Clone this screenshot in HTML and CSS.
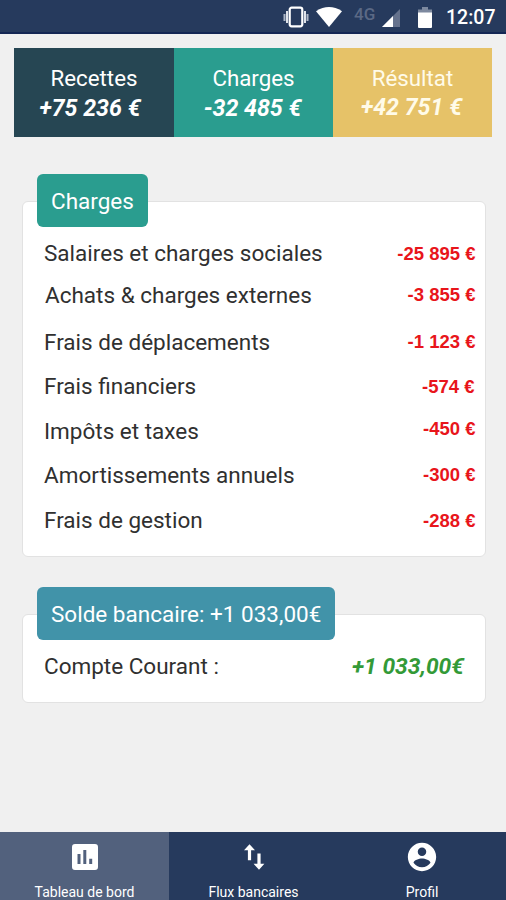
FILE: index.html
```html
<!DOCTYPE html>
<html lang="fr">
<head>
<meta charset="utf-8">
<title>Tableau de bord</title>
<link rel="stylesheet" href="styles.css">
</head>
<body>
<header class="status">
  <svg class="vibrate" viewBox="0 0 26 22"><rect x="6.7" y="1.7" width="12.6" height="18.6" rx="2" fill="none" stroke="#fff" stroke-width="2.2"/><path d="M4 5v12M22 5v12" stroke="#dfe3ea" stroke-width="2"/><path d="M1.5 8v7M24.500 8v7" stroke="#aeb7c7" stroke-width="2"/></svg>
  <svg class="wifi" viewBox="0 0 26 20"><path d="M0 4.2Q13-4.2 26 4.2L13 20Z" fill="#fff"/></svg>
  <span class="network">4G</span>
  <svg class="signal" viewBox="0 0 18 18"><path d="M0 18L18 0V18Z" fill="#65728d"/><path d="M0 18L11 7V18Z" fill="#fff"/></svg>
  <svg class="battery" viewBox="0 0 14 21"><path d="M4 0h6v2.5h4V6H0V2.5h4Z" fill="#7d899f"/><path d="M0 5.5h14V20a1 1 0 0 1-1 1H1a1 1 0 0 1-1-1Z" fill="#fff"/></svg>
  <time class="clock">12:07</time>
</header>
<main class="content">
  <section class="summary">
    <div class="tile income"><span>Recettes</span><strong>+75 236 €</strong></div>
    <div class="tile costs"><span>Charges</span><strong>-32 485 €</strong></div>
    <div class="tile result"><span>Résultat</span><strong>+42 751 €</strong></div>
  </section>
  <section class="card expenses">
    <h2 class="tag">Charges</h2>
    <ul class="rows">
      <li class="r1"><span>Salaires et charges sociales</span><b>-25 895 €</b></li>
      <li class="r2"><span>Achats &amp; charges externes</span><b>-3 855 €</b></li>
      <li class="r3"><span>Frais de déplacements</span><b>-1 123 €</b></li>
      <li class="r4"><span>Frais financiers</span><b>-574 €</b></li>
      <li class="r5"><span>Impôts et taxes</span><b>-450 €</b></li>
      <li class="r6"><span>Amortissements annuels</span><b>-300 €</b></li>
      <li class="r7"><span>Frais de gestion</span><b>-288 €</b></li>
    </ul>
  </section>
  <section class="card balance">
    <h2 class="tag">Solde bancaire: +1 033,00€</h2>
    <div class="account"><span>Compte Courant :</span><strong>+1 033,00€</strong></div>
  </section>
</main>
<nav class="tabs">
  <a class="tab active"><svg viewBox="0 0 34 34"><path fill="#fff" fill-rule="evenodd" d="M7 4H27Q30 4 30 7V27Q30 30 27 30H7Q4 30 4 27V7Q4 4 7 4ZM9.5 14v10h3V14ZM15.3 10v14h3V10ZM21.2 18.7V24h3v-5.3Z"/></svg><span>Tableau de bord</span></a>
  <a class="tab"><svg viewBox="0 0 34 34"><path fill="#fff" d="M7 10.2L12.5 4.3L18 10.2H14.1V20.2H10.9V10.2ZM16.6 23.8H20.4V13.5H23.6V23.8H27.4L22 29.7Z"/></svg><span>Flux bancaires</span></a>
  <a class="tab"><svg viewBox="0 0 24 24"><path fill="#fff" d="M12 2C6.5 2 2 6.500 2 12s4.500 10 10 10 10-4.500 10-10S17.500 2 12 2zm0 3.300c1.650 0 3 1.350 3 3s-1.350 3-3 3-3-1.350-3-3 1.350-3 3-3zm0 14c-2.500 0-4.700-1.300-6-3.200.03-2 4-3.100 6-3.100s5.970 1.100 6 3.100c-1.300 1.900-3.500 3.200-6 3.200z"/></svg><span>Profil</span></a>
</nav>
</body>
</html>
```
FILE: styles.css
```css
* { box-sizing: border-box; }
body {
  margin: 0;
  width: 506px;
  height: 900px;
  display: flex;
  flex-direction: column;
  overflow: hidden;
  background: #f0f0f0;
  color: #303030;
  font-family: Roboto, "Liberation Sans", sans-serif;
}
.status {
  height: 34px;
  flex: none;
  display: flex;
  align-items: flex-start;
  padding-left: 283px;
  background: #263a5d;
  border-bottom: 2px solid #142754;
}
.vibrate { width: 26px; height: 22px; margin-top: 6px; }
.wifi { width: 26px; height: 20px; margin: 7px 0 0 7px; }
.network { width: 22px; margin: 4px 0 0 12px; font-size: 17px; line-height: 20px; font-weight: 500; color: #5b6985; }
.signal { width: 18px; height: 18px; margin: 9px 0 0 6px; }
.battery { width: 14px; height: 21px; margin: 7px 0 0 18px; }
.clock { margin: 6px 0 0 14px; font-size: 19.5px; line-height: 24px; font-weight: 500; color: #fff; }
.content { flex: 1; padding: 14px 14px 0; }
.summary { display: grid; grid-template-columns: 160px 159px 159px; height: 89px; }
.tile {
  padding-top: 16px;
  text-align: center;
  color: #fff;
  font-size: 22.3px;
  line-height: 29px;
}
.tile span, .tile strong { display: block; }
.tile strong { font-size: 23.2px; line-height: 31px; font-style: italic; font-weight: 700; }
.income { background: #264653; }
.income strong { margin-right: 8px; }
.costs { background: #2a9d8f; }
.costs strong { margin-right: 2px; }
.result { background: #e6c268; color: #fffbe9; }
.result strong { margin-right: 2px; line-height: 29px; }
.card {
  width: 464px;
  margin-left: 8px;
  background: #fff;
  border: 1px solid #e2e2e2;
  border-radius: 6px;
}
.expenses { height: 356px; margin-top: 64px; }
.balance { height: 89px; margin-top: 57px; }
.tag {
  width: max-content;
  height: 53px;
  margin: -28px 0 0 14px;
  padding: 0 14px;
  border-radius: 6px;
  color: #fff;
  font-size: 22.5px;
  line-height: 55px;
  font-weight: 400;
}
.expenses .tag { background: #2a9d8f; }
.balance .tag { background: #4193a9; }
.rows { margin: 14px 0 0; padding: 0 9.5px 0 21px; list-style: none; }
.rows li {
  display: flex;
  justify-content: space-between;
  align-items: flex-start;
  height: 45px;
  font-size: 22.5px;
  line-height: 24px;
}
.rows b {
  padding-top: 1px;
  color: #e8151b;
  font-family: "Liberation Sans", Arial, sans-serif;
  font-size: 18.5px;
}
.rows .r1 { height: 42px; }
.rows .r2 { height: 47px; }
.rows .r2 span { padding-left: 1px; }
.rows .r2 b { padding-top: 0; }
.rows .r3 { height: 44px; }
.rows .r3 b { padding-top: 0; }
.rows .r4 b { padding-right: 1px; }
.rows .r5 { height: 44px; }
.rows .r5 b { padding-top: 0; margin-top: -2px; }
.rows .r6 b { padding-top: 0; }
.account {
  display: flex;
  justify-content: space-between;
  padding: 14px 21px 0;
  font-size: 22.5px;
  line-height: 24px;
}
.account strong { color: #339a37; font-size: 22.8px; line-height: 26px; font-style: italic; }
.tabs {
  flex: none;
  height: 68px;
  display: grid;
  grid-template-columns: 169px 169px 168px;
  background: #263a5d;
}
.tab { display: flex; flex-direction: column; align-items: center; padding-top: 8px; color: #fff; font-size: 14px; }
.tab svg { width: 34px; height: 34px; }
.tab span { margin-top: 9px; line-height: 18px; white-space: nowrap; }
.active { background: #52617d; }
```
